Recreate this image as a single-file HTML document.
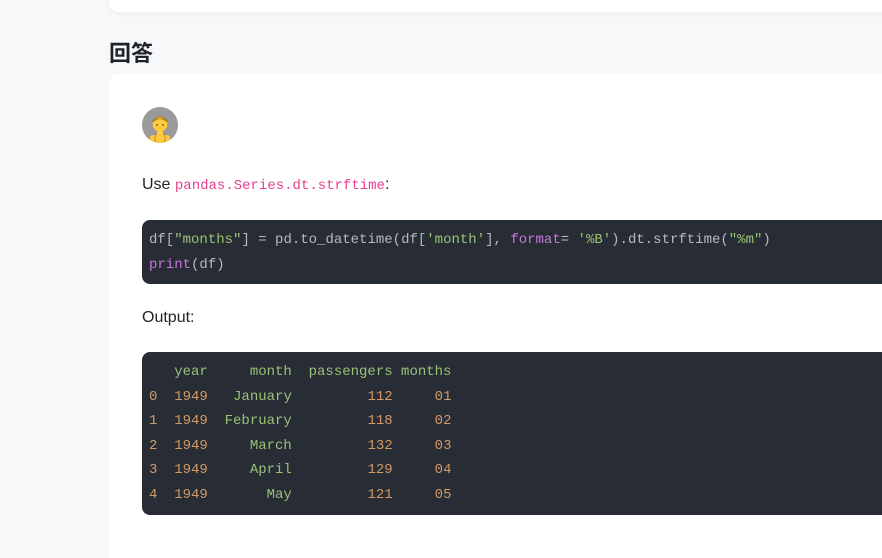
<!DOCTYPE html>
<html style="overflow:hidden"><head><meta charset="utf-8"><style>
*{margin:0;padding:0;box-sizing:border-box}
html,body{width:882px;height:558px;overflow:hidden}
body{background:#f7f8fa;font-family:"Liberation Sans","Noto Sans CJK SC",sans-serif;color:#1f2328;position:relative}
.top{position:absolute;left:109px;top:-20px;width:800px;height:32px;background:#fff;border-radius:10px;box-shadow:0 2px 6px rgba(0,0,0,.05)}
h2{position:absolute;left:109px;top:39px;font-size:22px;font-weight:bold;color:#1f2328;line-height:30px}
.card{position:absolute;left:109px;top:74px;width:800px;height:484px;background:#fff;border-radius:10px 0 0 0}
.av{position:absolute;left:33px;top:33px;width:36px;height:36px;border-radius:50%;background:#9a9a9a;overflow:hidden}
.use{position:absolute;left:33px;top:100px;font-size:16px;line-height:22px}
.ic{font-family:"Liberation Mono",monospace;font-size:14px;color:#e83e8c}
pre{position:absolute;left:33px;width:800px;background:#282c34;border-radius:8px;font-family:"Liberation Mono",monospace;font-size:14px;line-height:24.6px;color:#b3b9c5;padding:8px 7px}
.s{color:#98c379}.k{color:#c678dd}.n{color:#d19a66}
.out{position:absolute;left:33px;top:233px;font-size:16px;line-height:22px}
</style></head><body>
<div class="top"></div>
<h2>回答</h2>
<div class="card">
<div class="av"><svg width="36" height="36" viewBox="0 0 36 36"><circle cx="18" cy="17" r="7.5" fill="#ffc83d"/><path d="M10.5 15 Q18 4 25.5 15 Q18 8 10.5 15Z" fill="#ffc83d" stroke="#8a6a20" stroke-width=".7"/><circle cx="15" cy="18" r="1" fill="#7a6a50"/><circle cx="21" cy="18" r="1" fill="#7a6a50"/><rect x="8" y="28" width="20" height="10" rx="3" fill="#ffc83d"/><rect x="15" y="24" width="6" height="5" fill="#ffc83d"/><path d="M13 28v8M23 28v8" stroke="#b08a20" stroke-width=".8"/></svg></div>
<div class="use">Use <span class="ic">pandas.Series.dt.strftime</span>:</div>
<pre style="top:146px;height:64px">df[<span class="s">"months"</span>] = pd.to_datetime(df[<span class="s">'month'</span>], <span class="k">format</span>= <span class="s">'%B'</span>).dt.strftime(<span class="s">"%m"</span>)
<span class="k">print</span>(df)</pre>
<div class="out">Output:</div>
<pre style="top:278px;height:163px"><span class="s">   year     month  passengers months</span>
<span class="n">0  1949</span>   <span class="s">January</span>         <span class="n">112     01</span>
<span class="n">1  1949</span>  <span class="s">February</span>         <span class="n">118     02</span>
<span class="n">2  1949</span>     <span class="s">March</span>         <span class="n">132     03</span>
<span class="n">3  1949</span>     <span class="s">April</span>         <span class="n">129     04</span>
<span class="n">4  1949</span>       <span class="s">May</span>         <span class="n">121     05</span></pre>
</div>
</body></html>
